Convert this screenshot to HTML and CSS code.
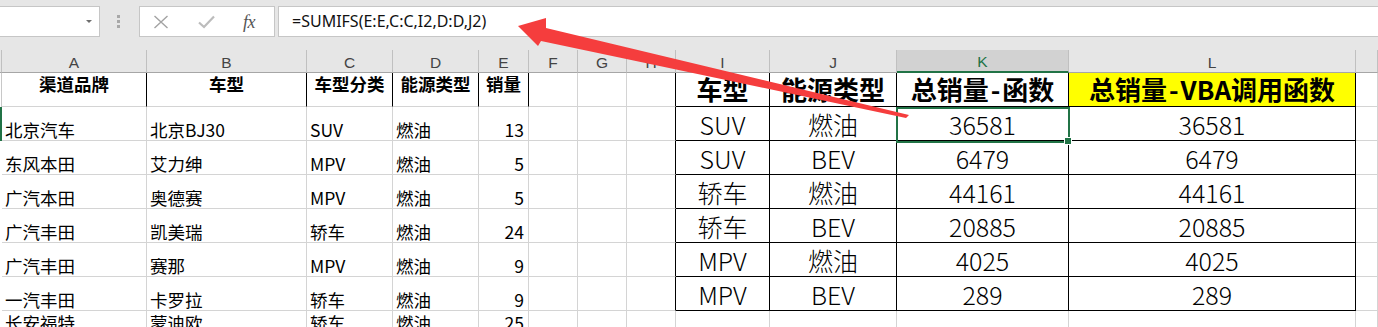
FILE: index.html
```html
<!DOCTYPE html>
<html lang="zh-CN">
<head>
<meta charset="utf-8">
<title>SUMIFS</title>
<link rel="stylesheet" href="styles.css">
</head>
<body>
<div class="toolbar">
  <div class="namebox"><span class="dd"></span></div>
  <div class="grip"><i></i><i></i><i></i></div>
  <div class="fnbox">
    <svg class="ic-x" width="16" height="14" viewBox="0 0 16 14"><path d="M1.5 1 L14.5 13 M14.5 1 L1.5 13" stroke="#a3a3a3" stroke-width="1.4" fill="none"/></svg>
    <svg class="ic-ok" width="17" height="14" viewBox="0 0 17 14"><path d="M1 7.5 L6 12 L16 1.5" stroke="#bcbcbc" stroke-width="2.2" fill="none"/></svg>
    <span class="fx">fx</span>
  </div>
  <div class="formula">=SUMIFS(E:E,C:C,I2,D:D,J2)</div>
</div>

<div class="sheet">
  <!-- column headers -->
  <div class="strip sh"></div>
  <div class="hd">A</div><div class="hd">B</div><div class="hd">C</div><div class="hd">D</div><div class="hd">E</div>
  <div class="hd">F</div><div class="hd">G</div><div class="hd">H</div><div class="hd">I</div><div class="hd">J</div>
  <div class="hd on">K</div><div class="hd">L</div><div class="hd"></div>

  <!-- row 1 -->
  <div class="strip sl"></div>
  <div class="c th">渠道品牌</div><div class="c th">车型</div><div class="c th">车型分类</div><div class="c th">能源类型</div><div class="c th">销量</div>
  <div class="c"></div><div class="c"></div><div class="c bl"></div>
  <div class="c t2 th2">车型</div><div class="c t2 th2">能源类型</div><div class="c t2 th2">总销量<span class="dash">-</span>函数</div><div class="c t2 th2 yl">总销量<span class="dash">-</span>VBA调用函数</div><div class="c"></div>

  <!-- row 2 -->
  <div class="strip sg"></div>
  <div class="c">北京汽车</div><div class="c">北京BJ30</div><div class="c">SUV</div><div class="c">燃油</div><div class="c num">13</div>
  <div class="c"></div><div class="c"></div><div class="c bl"></div>
  <div class="c t2">SUV</div><div class="c t2">燃油</div><div class="c t2 selcell">36581<span class="sel"><span class="handle"></span></span></div><div class="c t2">36581</div><div class="c"></div>

  <!-- row 3 -->
  <div class="strip"></div>
  <div class="c">东风本田</div><div class="c">艾力绅</div><div class="c">MPV</div><div class="c">燃油</div><div class="c num">5</div>
  <div class="c"></div><div class="c"></div><div class="c bl"></div>
  <div class="c t2">SUV</div><div class="c t2">BEV</div><div class="c t2">6479</div><div class="c t2">6479</div><div class="c"></div>

  <!-- row 4 -->
  <div class="strip"></div>
  <div class="c">广汽本田</div><div class="c">奥德赛</div><div class="c">MPV</div><div class="c">燃油</div><div class="c num">5</div>
  <div class="c"></div><div class="c"></div><div class="c bl"></div>
  <div class="c t2">轿车</div><div class="c t2">燃油</div><div class="c t2">44161</div><div class="c t2">44161</div><div class="c"></div>

  <!-- row 5 -->
  <div class="strip"></div>
  <div class="c">广汽丰田</div><div class="c">凯美瑞</div><div class="c">轿车</div><div class="c">燃油</div><div class="c num">24</div>
  <div class="c"></div><div class="c"></div><div class="c bl"></div>
  <div class="c t2">轿车</div><div class="c t2">BEV</div><div class="c t2">20885</div><div class="c t2">20885</div><div class="c"></div>

  <!-- row 6 -->
  <div class="strip"></div>
  <div class="c">广汽丰田</div><div class="c">赛那</div><div class="c">MPV</div><div class="c">燃油</div><div class="c num">9</div>
  <div class="c"></div><div class="c"></div><div class="c bl"></div>
  <div class="c t2">MPV</div><div class="c t2">燃油</div><div class="c t2">4025</div><div class="c t2">4025</div><div class="c"></div>

  <!-- row 7 -->
  <div class="strip"></div>
  <div class="c">一汽丰田</div><div class="c">卡罗拉</div><div class="c">轿车</div><div class="c">燃油</div><div class="c num">9</div>
  <div class="c"></div><div class="c"></div><div class="c bl"></div>
  <div class="c t2">MPV</div><div class="c t2">BEV</div><div class="c t2">289</div><div class="c t2">289</div><div class="c"></div>

  <!-- row 8 -->
  <div class="strip"></div>
  <div class="c">长安福特</div><div class="c">蒙迪欧</div><div class="c">轿车</div><div class="c">燃油</div><div class="c num">25</div>
  <div class="c"></div><div class="c"></div><div class="c"></div>
  <div class="c"></div><div class="c"></div><div class="c"></div><div class="c"></div><div class="c"></div>
</div>

<svg class="arrow" width="1378" height="327" viewBox="0 0 1378 327">
  <polygon points="518,26 546,18 546,28 909,115 906,118 541,41 538,46" fill="#f53d3d"/>
</svg>
</body>
</html>
```
FILE: styles.css
```css
body {
  margin: 0;
  width: 1378px;
  height: 327px;
  overflow: hidden;
  background: #fff;
  position: relative;
  font-family: "Noto Sans CJK SC", sans-serif;
  color: #000;
}

/* ---------- formula bar ---------- */
.toolbar {
  height: 50px;
  background: #e6e6e6;
  display: flex;
  align-items: flex-start;
  padding-top: 6px;
  box-sizing: border-box;
}
.namebox {
  width: 101px;
  height: 31px;
  margin-left: -1px;
  background: #fff;
  border: 1px solid #c6c6c6;
  box-sizing: border-box;
  display: flex;
  align-items: center;
  justify-content: flex-end;
  padding-right: 7px;
}
.dd {
  width: 0;
  height: 0;
  border-left: 3.5px solid transparent;
  border-right: 3.5px solid transparent;
  border-top: 3px solid #6e6e6e;
}
.grip {
  margin-left: 17px;
  padding-top: 9px;
  display: flex;
  flex-direction: column;
  gap: 2px;
}
.grip i {
  display: block;
  width: 3px;
  height: 3px;
  background: #a8a8a8;
}
.fnbox {
  margin-left: 19px;
  width: 136px;
  height: 31px;
  background: #fff;
  border: 1px solid #c6c6c6;
  box-sizing: border-box;
  display: flex;
  align-items: center;
}
.ic-x { margin-left: 13px; margin-top: 1px; }
.ic-ok { margin-left: 29px; margin-top: 1px; }
.fx {
  margin-left: 28px;
  font-family: "Liberation Serif", serif;
  font-style: italic;
  font-size: 18px;
  color: #555;
  line-height: 1;
  letter-spacing: -0.5px;
}
.formula {
  margin-left: 3px;
  flex: 1;
  height: 31px;
  background: #fff;
  border: 1px solid #c6c6c6;
  border-right: none;
  box-sizing: border-box;
  padding-left: 13px;
  font-family: "Noto Sans", sans-serif;
  font-size: 16px;
  line-height: 29px;
  color: #111;
  white-space: nowrap;
}

/* ---------- sheet grid ---------- */
.sheet {
  display: grid;
  grid-template-columns: 2px 145px 160px 86px 86px 50px 49px 49px 49px 94px 127px 172px 287px 22px;
  grid-template-rows: 23px repeat(7, 34px) 23px;
}
.sheet > div { box-sizing: border-box; }

.strip { background: #fff; }
.strip.sh { background: #e6e6e6; border-bottom: 1px solid #a6a6a6; border-right: 1px solid #c0c0c0; }
.strip.sl { border-right: 1px solid #c8c8c8; }
.strip.sg { background: #217346; }

.hd {
  background: #e6e6e6;
  border-right: 1px solid #c0c0c0;
  border-bottom: 1px solid #a6a6a6;
  display: flex;
  align-items: center;
  justify-content: center;
  padding-top: 3px;
  font-family: "Liberation Sans", sans-serif;
  font-size: 15.5px;
  line-height: 22px;
  color: #444;
}
.hd.on {
  background: #d2d2d2;
  color: #217346;
  border-bottom: 2px solid #217346;
}

.c {
  border-right: 1px solid #d4d4d4;
  border-bottom: 1px solid #d4d4d4;
  display: flex;
  align-items: flex-end;
  justify-content: flex-start;
  padding: 0 3px 0;
  font-size: 17.5px;
  line-height: 1.2;
  white-space: nowrap;
}
.c.num { justify-content: flex-end; padding-right: 4px; }
.c.th {
  font-weight: bold;
  justify-content: center;
  align-items: flex-start;
  padding-top: 0;
  border-right-color: #000;
}
.c.bl { border-right-color: #000; }

.c.t2 {
  justify-content: center;
  font-size: 25px;
  font-weight: 300;
  line-height: 1.1;
  padding: 0 0 2px;
  border-right-color: #000;
  border-bottom-color: #000;
}
.c.th2 {
  font-weight: bold;
  font-size: 26px;
  padding-bottom: 2px;
  border-bottom-color: #000;
}
.dash { margin: 0 2px; }
.c.yl { background: #ffff00; }

.selcell { position: relative; }
.sel {
  position: absolute;
  left: -1px;
  top: 0;
  width: 174px;
  height: 36px;
  border: 2px solid #217346;
  box-sizing: border-box;
}
.handle {
  position: absolute;
  right: -4px;
  bottom: -4px;
  width: 6px;
  height: 6px;
  background: #217346;
  border: 1px solid #fff;
}

.arrow {
  position: absolute;
  left: 0;
  top: 0;
  pointer-events: none;
}
```
